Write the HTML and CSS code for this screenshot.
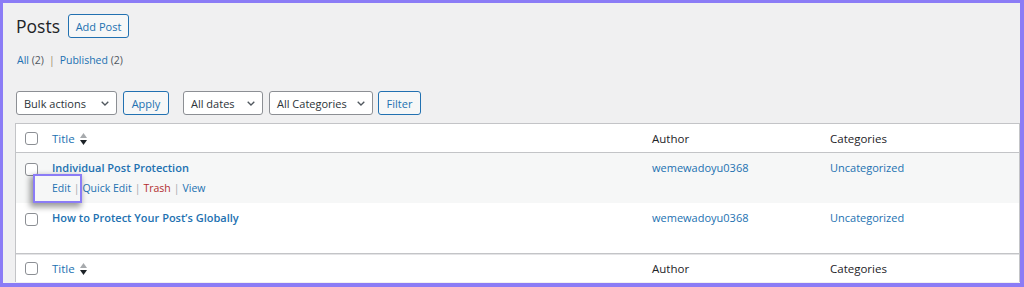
FILE: index.html
```html
<!DOCTYPE html>
<html>
    <head>
        <meta charset="utf-8">
        <link rel="stylesheet" href="styles.css">
        <title>Posts</title>
    </head>
    <body>
        <div class="frame">
            <div class="wrap">
                <div class="page-head">
                    <h1>Posts</h1>
                    <a class="btn btn-add">Add Post</a>
                </div>

                <ul class="subsubsub">
                    <li><a class="cur">All <span class="count">(2)</span></a><span class="sep">|</span></li>
                    <li><a>Published <span class="count">(2)</span></a></li>
                </ul>

                <div class="tablenav">
                    <div class="select sel-bulk"><span>Bulk actions</span><svg class="chev" viewBox="0 0 8 5" width="8" height="5"><path d="M0.7 0.7 L4 4 L7.3 0.7" fill="none" stroke="#50575e" stroke-width="1.3"/></svg></div>
                    <a class="btn btn-apply">Apply</a>
                    <div class="select sel-dates"><span>All dates</span><svg class="chev" viewBox="0 0 8 5" width="8" height="5"><path d="M0.7 0.7 L4 4 L7.3 0.7" fill="none" stroke="#50575e" stroke-width="1.3"/></svg></div>
                    <div class="select sel-cats"><span>All Categories</span><svg class="chev" viewBox="0 0 8 5" width="8" height="5"><path d="M0.7 0.7 L4 4 L7.3 0.7" fill="none" stroke="#50575e" stroke-width="1.3"/></svg></div>
                    <a class="btn btn-filter">Filter</a>
                </div>

                <div class="table-box">
                    <table class="posts">
                        <colgroup>
                            <col class="c-cb">
                            <col class="c-title">
                            <col class="c-author">
                            <col>
                        </colgroup>
                        <thead>
                            <tr>
                                <th class="cb"><span class="box"></span></th>
                                <th class="title"><a>Title</a><svg class="sort" viewBox="0 0 7 12" width="7" height="12"><path d="M0 5 L3.5 0 L7 5 Z" fill="#a7aaad"/><path d="M0 7 L7 7 L3.5 12 Z" fill="#1d2327"/></svg></th>
                                <th>Author</th>
                                <th>Categories</th>
                            </tr>
                        </thead>
                        <tbody>
                            <tr class="alt">
                                <td class="cb"><span class="box"></span></td>
                                <td class="title">
                                    <a class="row-title">Individual Post Protection</a>
                                    <div class="row-actions">
                                        <a>Edit</a><span class="sep">|</span><a>Quick Edit</a><span class="sep">|</span><a class="trash">Trash</a><span class="sep">|</span><a>View</a>
                                    </div>
                                </td>
                                <td><a>wemewadoyu0368</a></td>
                                <td><a>Uncategorized</a></td>
                            </tr>
                            <tr>
                                <td class="cb"><span class="box"></span></td>
                                <td class="title"><a class="row-title">How to Protect Your Post’s Globally</a></td>
                                <td><a>wemewadoyu0368</a></td>
                                <td><a>Uncategorized</a></td>
                            </tr>
                        </tbody>
                        <tfoot>
                            <tr>
                                <th class="cb"><span class="box"></span></th>
                                <th class="title"><a>Title</a><svg class="sort" viewBox="0 0 7 12" width="7" height="12"><path d="M0 5 L3.5 0 L7 5 Z" fill="#a7aaad"/><path d="M0 7 L7 7 L3.5 12 Z" fill="#1d2327"/></svg></th>
                                <th>Author</th>
                                <th>Categories</th>
                            </tr>
                        </tfoot>
                    </table>
                    <!-- marker drawn over the Edit link -->
                    <div class="highlight"></div>
                </div>
            </div>
        </div>
    </body>
</html>
```

FILE: styles.css
```css
@charset "UTF-8";
body {
    margin: 0;
    font-family: "Open Sans", "Noto Sans", sans-serif;
    font-size: 11px;
    color: #3c434a;
}
a {
    color: #2271b1;
    text-decoration: none;
}
.frame {
    height: 287px;
    box-sizing: border-box;
    border-style: solid;
    border-color: #8b7cf6;
    border-width: 3px 4px 4px 3px;
    background: #f0f0f1;
    overflow: hidden;
}
.wrap {
    padding: 11px 0 0 12px;
}
.page-head {
    display: flex;
    align-items: center;
    height: 24px;
    gap: 8px;
}
h1 {
    margin: 0 0 0 1px;
    font-size: 17.5px;
    font-weight: 400;
    line-height: 24px;
    color: #1d2327;
}
.btn {
    display: inline-flex;
    align-items: center;
    justify-content: center;
    box-sizing: border-box;
    height: 24px;
    border: 1px solid #2271b1;
    border-radius: 3px;
    background: #f6f7f7;
    color: #2271b1;
    font-size: 11px;
}
.btn-add {
    width: 61px;
}
.subsubsub {
    list-style: none;
    margin: 15px 0 0 2px;
    padding: 0;
    display: flex;
    line-height: 14px;
    font-size: 10.5px;
}
.subsubsub .count {
    color: #50575e;
}
.subsubsub .sep {
    color: #a08a70;
    margin: 0 5px;
}
.tablenav {
    margin: 24px 0 8px 1px;
    display: flex;
    align-items: center;
    height: 24px;
}
.select {
    box-sizing: border-box;
    height: 24px;
    border: 1px solid #8c8f94;
    border-radius: 3px;
    background: #fff;
    color: #2c3338;
    display: flex;
    align-items: center;
    justify-content: space-between;
    padding: 0 7px 0 7px;
    font-size: 11px;
}
.sel-bulk {
    width: 101px;
}
.btn-apply {
    width: 46px;
    margin-left: 6px;
}
.sel-dates {
    width: 80px;
    margin-left: 14px;
}
.sel-cats {
    width: 104px;
    margin-left: 6px;
}
.btn-filter {
    width: 43px;
    margin-left: 5px;
}
.table-box {
    position: relative;
}
.posts {
    width: 1005px;
    table-layout: fixed;
    border-collapse: separate;
    border-spacing: 0;
    border: 1px solid #c3c4c7;
    border-bottom: none;
    background: #fff;
}
.c-cb {
    width: 29px;
}
.c-title {
    width: 597px;
}
.c-author {
    width: 178px;
}
.posts th {
    font-weight: 400;
    text-align: left;
    color: #1d2327;
    font-size: 11.5px;
    height: 29px;
    box-sizing: border-box;
    padding: 0 0 0 10px;
    vertical-align: middle;
}
.posts thead th {
    height: 29px;
    border-bottom: 1px solid #c3c4c7;
}
.posts tfoot th {
    border-top: 1px solid #c3c4c7;
    box-shadow: inset 0 1px 0 #e4e4e6;
}
.posts td {
    height: 50px;
    box-sizing: border-box;
    padding: 8px 0 0 10px;
    vertical-align: top;
    font-size: 11px;
    line-height: 14px;
}
.posts .cb {
    padding-left: 9px;
}
.posts td.cb {
    padding-top: 10px;
}
.posts .title {
    padding-left: 7px;
}
.posts .alt td {
    background: #f6f7f7;
}
.box {
    display: block;
    width: 13px;
    height: 13px;
    box-sizing: border-box;
    border: 1px solid #8c8f94;
    border-radius: 3px;
    background: #fff;
}
.sort {
    margin-left: 5px;
    vertical-align: -2px;
}
.row-title {
    font-size: 11px;
    font-weight: 600;
}
.row-actions {
    margin-top: 6px;
    font-size: 10.5px;
    color: #a7aaad;
}
.row-actions .sep {
    margin: 0 3px;
}
.row-actions .trash {
    color: #b32d2e;
}
.highlight {
    position: absolute;
    left: 18px;
    top: 51px;
    width: 49px;
    height: 29px;
    box-sizing: border-box;
    border: 2px solid #8b7cf6;
    box-shadow: -2px 3px 6px 1px rgba(0, 0, 0, 0.4);
}
```
